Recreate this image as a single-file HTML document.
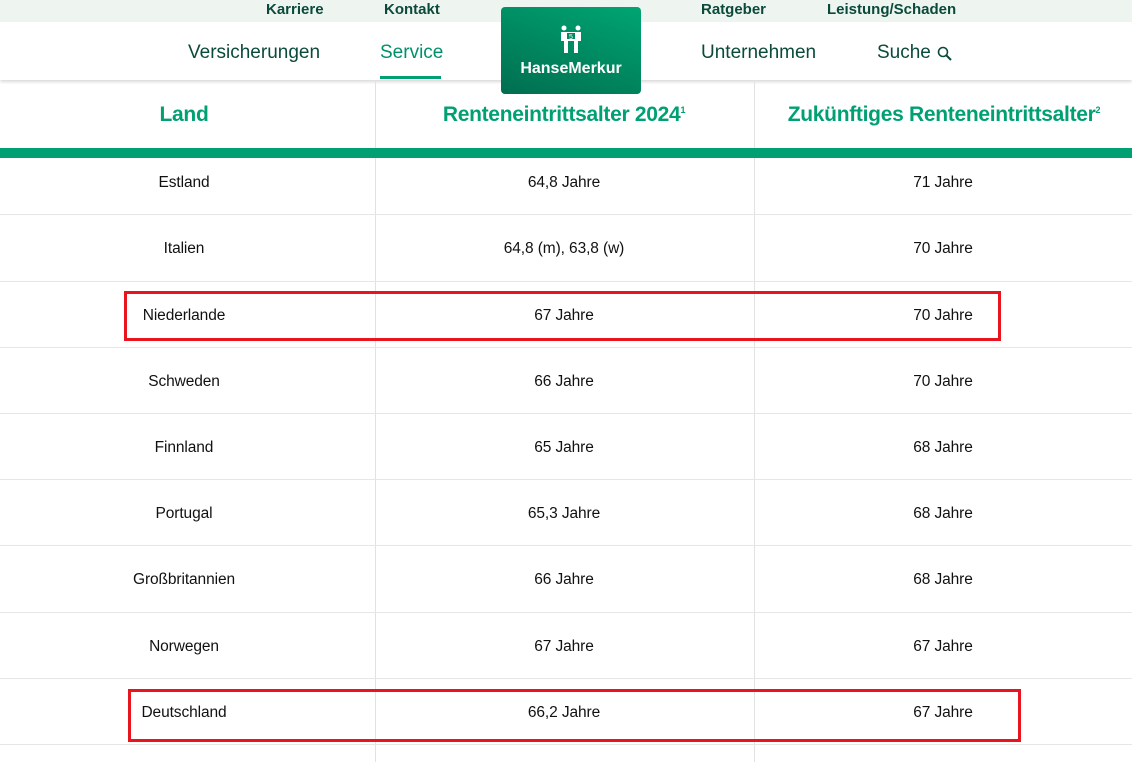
<!DOCTYPE html>
<html><head><meta charset="utf-8"><style>
body{margin:0;width:1132px;height:762px;overflow:hidden;background:#fff;font-family:"Liberation Sans",sans-serif;position:relative}
.top{position:absolute;left:0;top:0;width:1132px;height:22px;background:#eef5f1}
.top span{position:absolute;top:1px;font-size:15px;line-height:17px;font-weight:bold;color:#0b4a3a;letter-spacing:0}
.nav{position:absolute;left:0;top:22px;width:1132px;height:58px;background:#fff;box-shadow:0 2px 3px rgba(0,0,0,.15)}
.nav span{position:absolute;top:20px;font-size:19px;line-height:22px;color:#0b4a3a;letter-spacing:0}
.logo{position:absolute;left:501px;top:7px;width:140px;height:87px;border-radius:4px;background:linear-gradient(200deg,#00a572,#006e50);color:#fff;text-align:center;z-index:3}
.logo b{position:absolute;left:0;right:0;top:53px;font-size:16px;letter-spacing:0}
.col{position:absolute;top:80px;bottom:0;width:1px;background:#e2e2e2}
.h{position:absolute;top:103px;font-size:21px;font-weight:bold;color:#00a073;text-align:center;letter-spacing:-0.3px}
.h sup{font-size:9px}
.band{position:absolute;left:0;top:148px;width:1132px;height:10px;background:#00a073}
.row{position:absolute;left:0;width:1132px;height:1px;background:#e6e6e6}
.c{position:absolute;font-size:15.5px;color:#111;text-align:center;width:300px;letter-spacing:-0.1px;margin-top:1px}
.red{position:absolute;border:3px solid #e8141e;box-sizing:border-box}
</style></head><body>
<div class="top">
<span style="left:266px">Karriere</span><span style="left:384px">Kontakt</span>
<span style="left:701px">Ratgeber</span><span style="left:827px">Leistung/Schaden</span>
</div>
<div class="nav">
<span style="left:188px">Versicherungen</span>
<span style="left:380px;color:#00916a">Service</span>
<div style="position:absolute;left:380px;top:54px;width:61px;height:3px;background:#00a073"></div>
<span style="left:701px">Unternehmen</span>
<span style="left:877px">Suche</span>
<svg style="position:absolute;left:936px;top:23px" width="18" height="18" viewBox="0 0 18 18"><circle cx="7" cy="7" r="4.5" fill="none" stroke="#0b4a3a" stroke-width="1.6"/><path d="M10.5 10.5L15 15" stroke="#0b4a3a" stroke-width="2"/></svg>
</div>
<div class="logo">
<svg style="position:absolute;left:57px;top:18px" width="26" height="30" viewBox="0 0 26 30"><circle cx="6" cy="3" r="2.5" fill="#fff"/><circle cx="20" cy="3" r="2.5" fill="#fff"/><path d="M3 7h20v9h-3v12h-4V16h-6v12H6V16H3z" fill="#fff"/><rect x="9" y="8" width="8" height="6" fill="#00875f"/><text x="13" y="14" font-size="7" fill="#fff" text-anchor="middle" font-family="Liberation Sans">5</text></svg>
<b>HanseMerkur</b>
</div>
<div class="col" style="left:375px"></div>
<div class="col" style="left:754px"></div>
<div class="h" style="left:34px;width:300px">Land</div>
<div class="h" style="left:414px;width:300px">Renteneintrittsalter 2024<sup>1</sup></div>
<div class="h" style="left:764px;width:360px">Zukünftiges Renteneintrittsalter<sup>2</sup></div>
<div class="band"></div>
<div class="row" style="top:214px"></div><div class="row" style="top:281px"></div><div class="row" style="top:347px"></div><div class="row" style="top:413px"></div><div class="row" style="top:479px"></div><div class="row" style="top:545px"></div><div class="row" style="top:612px"></div><div class="row" style="top:678px"></div><div class="row" style="top:744px"></div>

<div class="c" style="left:34px;top:173px">Estland</div><div class="c" style="left:414px;top:173px">64,8 Jahre</div><div class="c" style="left:793px;top:173px">71 Jahre</div>
<div class="c" style="left:34px;top:239px">Italien</div><div class="c" style="left:414px;top:239px">64,8 (m), 63,8 (w)</div><div class="c" style="left:793px;top:239px">70 Jahre</div>
<div class="c" style="left:34px;top:306px">Niederlande</div><div class="c" style="left:414px;top:306px">67 Jahre</div><div class="c" style="left:793px;top:306px">70 Jahre</div>
<div class="c" style="left:34px;top:372px">Schweden</div><div class="c" style="left:414px;top:372px">66 Jahre</div><div class="c" style="left:793px;top:372px">70 Jahre</div>
<div class="c" style="left:34px;top:438px">Finnland</div><div class="c" style="left:414px;top:438px">65 Jahre</div><div class="c" style="left:793px;top:438px">68 Jahre</div>
<div class="c" style="left:34px;top:504px">Portugal</div><div class="c" style="left:414px;top:504px">65,3 Jahre</div><div class="c" style="left:793px;top:504px">68 Jahre</div>
<div class="c" style="left:34px;top:570px">Großbritannien</div><div class="c" style="left:414px;top:570px">66 Jahre</div><div class="c" style="left:793px;top:570px">68 Jahre</div>
<div class="c" style="left:34px;top:637px">Norwegen</div><div class="c" style="left:414px;top:637px">67 Jahre</div><div class="c" style="left:793px;top:637px">67 Jahre</div>
<div class="c" style="left:34px;top:703px">Deutschland</div><div class="c" style="left:414px;top:703px">66,2 Jahre</div><div class="c" style="left:793px;top:703px">67 Jahre</div>
<div class="red" style="left:124px;top:291px;width:877px;height:50px"></div>
<div class="red" style="left:128px;top:689px;width:893px;height:53px"></div>
</body></html>
